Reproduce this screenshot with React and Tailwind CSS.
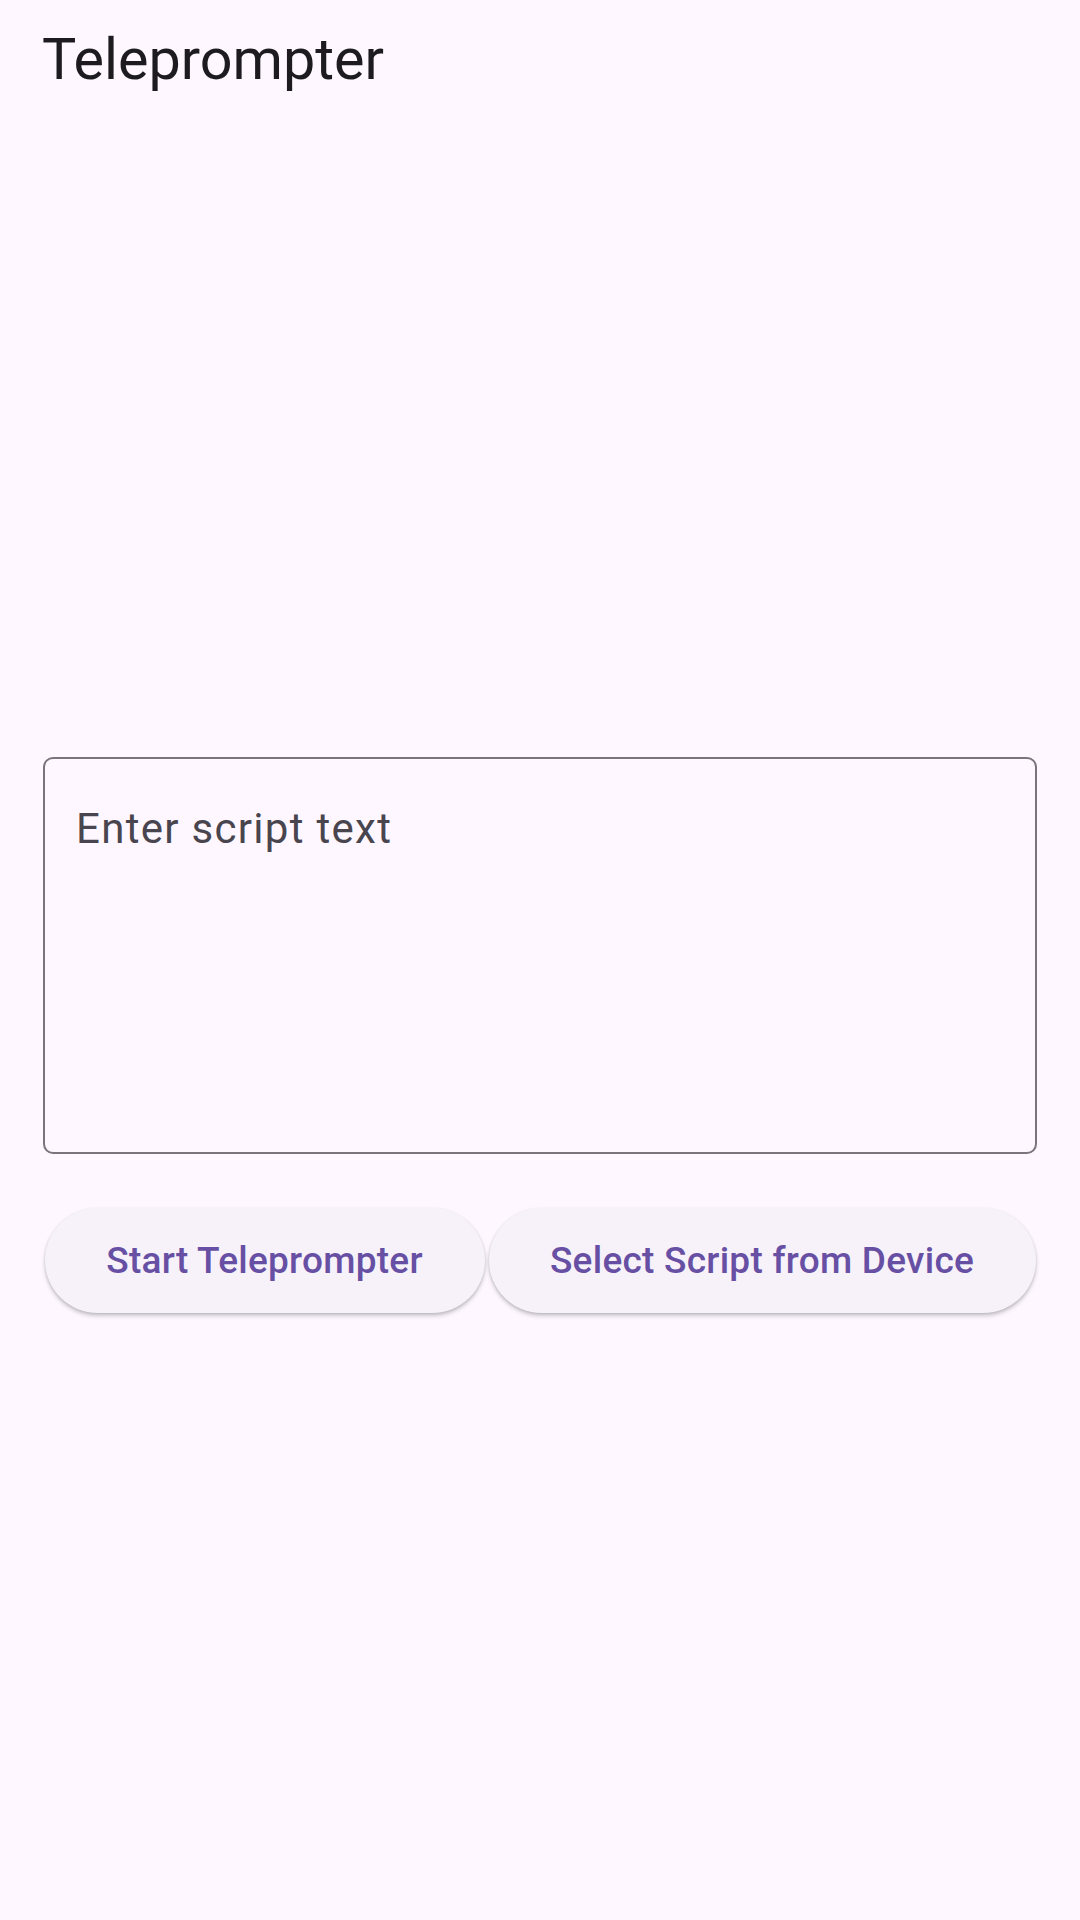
import React, { useState } from "react";

function App() {
  const [script, setScript] = useState("");

  return (
    <div
      className="w-[1080px] h-[1920px] bg-[#FEF7FF] flex flex-col"
      style={{ fontFamily: "Roboto, 'Noto Sans', sans-serif" }}
    >
      {/* app bar */}
      <header className="h-[147px] pt-[28px] px-[42px] shrink-0">
        <h1 className="text-[57.5px] leading-[64px] font-normal text-[#1D1B20]">Teleprompter</h1>
      </header>

      {/* body */}
      <main className="flex-1 flex flex-col justify-center px-[43px] pt-[3px]">
        <textarea
          value={script}
          onChange={(e) => setScript(e.target.value)}
          placeholder="Enter script text"
          className="w-full h-[397px] resize-none border-[2.6px] border-[#79747E] rounded-[10px] bg-transparent pl-[31px] pr-[31px] pt-[38px] text-[42px] leading-[63px] tracking-[1.3px] text-[#1D1B20] placeholder:text-[#49454F] outline-none"
        />

        <div className="flex justify-center gap-[4px] mt-[54px]">
          <button className="shrink-0 w-[440px] whitespace-nowrap h-[105px] rounded-full bg-[#F7F2FA] text-[#6750A4] text-[37px] font-medium tracking-[0.26px] shadow-[0_3px_4px_rgba(0,0,0,0.18),0_1px_3px_rgba(0,0,0,0.12)]">
            Start Teleprompter
          </button>
          <button className="shrink-0 w-[547px] whitespace-nowrap h-[105px] rounded-full bg-[#F7F2FA] text-[#6750A4] text-[37px] font-medium tracking-[0.26px] shadow-[0_3px_4px_rgba(0,0,0,0.18),0_1px_3px_rgba(0,0,0,0.12)]">
            Select Script from Device
          </button>
        </div>
      </main>
    </div>
  );
}

export default App;
